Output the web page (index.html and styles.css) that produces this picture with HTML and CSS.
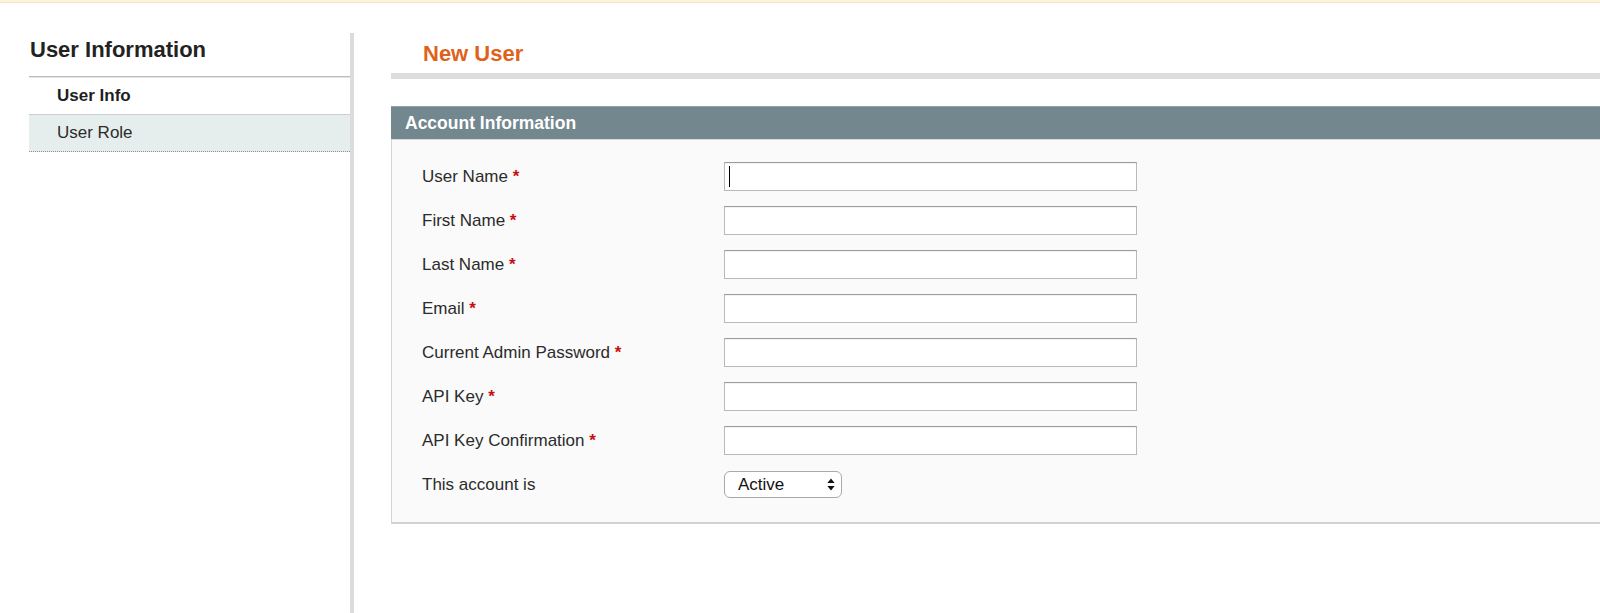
FILE: index.html
```html
<!DOCTYPE html>
<html lang="en">
<head>
<meta charset="utf-8">
<title>New User</title>
<link rel="stylesheet" href="styles.css">
</head>
<body>
<div class="notice-strip"></div>
<div class="layout">
  <aside class="sidebar">
    <h3 class="side-title">User Information</h3>
    <ul class="tabs">
      <li class="tab tab-active">User Info</li>
      <li class="tab tab-alt">User Role</li>
    </ul>
  </aside>
  <main class="main">
    <div class="page-head">
      <h3 class="page-title">New User</h3>
    </div>
    <section class="box">
      <div class="box-head">Account Information</div>
      <div class="box-body">
        <div class="form-grid">
          <label class="lbl">User Name <span class="req">*</span></label>
          <div class="field field-focus"><input class="inp" type="text"><span class="caret"></span></div>

          <label class="lbl">First Name <span class="req">*</span></label>
          <div class="field"><input class="inp" type="text"></div>

          <label class="lbl">Last Name <span class="req">*</span></label>
          <div class="field"><input class="inp" type="text"></div>

          <label class="lbl">Email <span class="req">*</span></label>
          <div class="field"><input class="inp" type="text"></div>

          <label class="lbl">Current Admin Password <span class="req">*</span></label>
          <div class="field"><input class="inp" type="password"></div>

          <label class="lbl">API Key <span class="req">*</span></label>
          <div class="field"><input class="inp" type="text"></div>

          <label class="lbl">API Key Confirmation <span class="req">*</span></label>
          <div class="field"><input class="inp" type="text"></div>

          <label class="lbl">This account is</label>
          <div class="field field-last">
            <div class="sel-wrap">
              <select class="sel">
                <option>Active</option>
                <option>Inactive</option>
              </select>
              <svg class="sel-arrows" width="8" height="13" viewBox="0 0 8 13">
                <path d="M4 0.5 L7.6 5 L0.4 5 Z" fill="#111"/>
                <path d="M4 12.5 L7.6 8 L0.4 8 Z" fill="#111"/>
              </svg>
            </div>
          </div>
        </div>
      </div>
    </section>
  </main>
</div>
</body>
</html>
```

FILE: styles.css
```css
html, body {
  margin: 0;
  padding: 0;
  background: #ffffff;
  height: 100%;
  overflow: hidden;
}

body {
  font-family: "Liberation Sans", Arial, Helvetica, sans-serif;
  color: #2b2b2b;
}

.notice-strip {
  height: 2px;
  background: #fdf3dc;
  border-bottom: 1px solid #f3e4c2;
}

.layout {
  display: flex;
  align-items: stretch;
  padding: 30px 0 0 29px;
  height: calc(100vh - 33px);
}

/* ---------- sidebar ---------- */
.sidebar {
  width: 321px;
  flex: none;
  border-right: 4px solid #d8d8d8;
  border-image: linear-gradient(to right, #e8e8e8, #d2d2d2 60%, #dcdcdc) 1;
}

.side-title {
  margin: 0;
  padding: 4px 0 14px 1px;
  font-size: 22px;
  line-height: 25px;
  font-weight: bold;
  color: #222222;
  border-bottom: 1px solid #bdbdbd;
  box-shadow: 0 1px 0 #e4e4e4;
}

.tabs {
  list-style: none;
  margin: 0;
  padding: 0;
}

.tab {
  padding-left: 28px;
  font-size: 17px;
  height: 37px;
  line-height: 38px;
  color: #2b2b2b;
}

.tab-active {
  font-weight: bold;
  color: #1e1e1e;
}

.tab-alt {
  background: #e6eeed;
  border-top: 1px solid #c9cfce;
  border-bottom: 1px dotted #8e8e8e;
  height: 36px;
  line-height: 36px;
}

/* ---------- main ---------- */
.main {
  flex: 1;
  margin-left: 37px;
  min-width: 0;
}

.page-head {
  padding: 8px 0 7px 32px;
  border-bottom: 6px solid #dddddd;
}

.page-title {
  margin: 0;
  font-size: 22px;
  line-height: 25px;
  font-weight: bold;
  color: #df611b;
}

.box {
  margin-top: 27px;
}

.box-head {
  height: 32px;
  line-height: 32px;
  padding-left: 14px;
  background: #73878f;
  border-top: 1px solid #93a2a8;
  color: #ffffff;
  font-weight: bold;
  font-size: 17.5px;
}

.box-body {
  background: #fafafa;
  border-left: 1px solid #d4d4d4;
  border-top: 1px solid #dcd6da;
  border-bottom: 2px solid #d2d2d2;
  padding: 22px 0 23px 30px;
}

.form-grid {
  display: grid;
  grid-template-columns: 302px 413px;
  grid-auto-rows: 29px;
  row-gap: 15px;
  align-items: center;
}

.lbl {
  font-size: 17px;
  line-height: 20px;
  color: #2b2b2b;
}

.req {
  color: #c70f0f;
  font-weight: bold;
}

.field {
  position: relative;
  height: 29px;
}

.inp {
  display: block;
  box-sizing: border-box;
  width: 413px;
  height: 29px;
  margin: 0;
  padding: 0 6px;
  background: #ffffff;
  border: 1px solid #b9b9b9;
  border-top-color: #9c9c9c;
  border-radius: 0;
  box-shadow: inset 0 1px 1px rgba(0, 0, 0, 0.06);
  font-family: inherit;
  font-size: 16px;
  outline: none;
}

.caret {
  position: absolute;
  left: 5px;
  top: 4px;
  width: 1px;
  height: 21px;
  background: #000000;
}

.field-last {
  height: 27px;
}

.sel-wrap {
  position: relative;
  width: 118px;
  height: 27px;
}

.sel {
  -webkit-appearance: none;
  appearance: none;
  box-sizing: border-box;
  width: 118px;
  height: 27px;
  margin: 0;
  padding: 0 0 0 13px;
  border: 1px solid #a9a9a9;
  border-radius: 6px;
  background: #ffffff;
  font-family: inherit;
  font-size: 17px;
  color: #111111;
  outline: none;
}

.sel-arrows {
  position: absolute;
  right: 7px;
  top: 7px;
  pointer-events: none;
}
```
